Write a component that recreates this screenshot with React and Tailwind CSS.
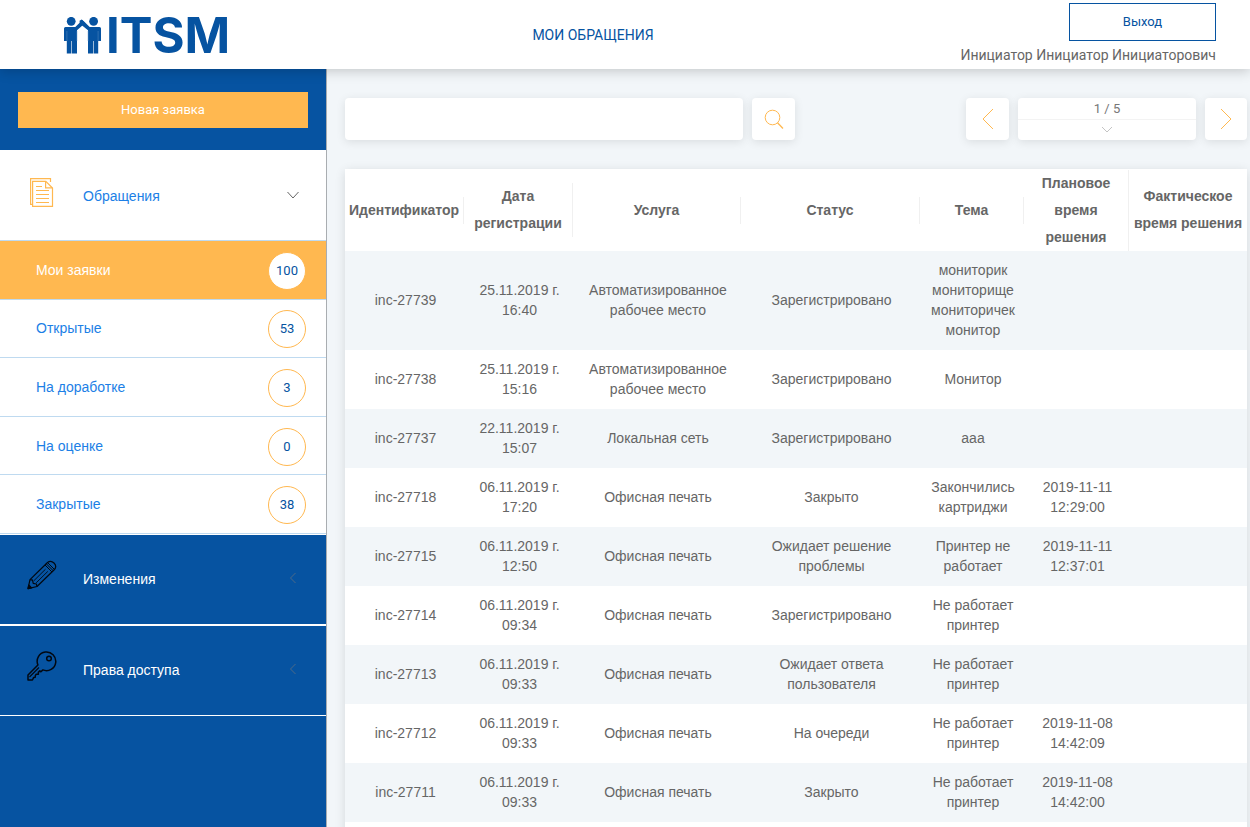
import React from 'react';

const COLUMNS = [
  { title: 'Идентификатор', width: 'w-[119px]' },
  { title: 'Дата регистрации', width: 'w-[109px]' },
  { title: 'Услуга', width: 'w-[168px]' },
  { title: 'Статус', width: 'w-[179px]' },
  { title: 'Тема', width: 'w-[104px]' },
  { title: 'Плановое время решения', width: 'w-[105px]' },
  { title: 'Фактическое время решения', width: 'w-[118px]' },
];

const ROWS = [
  ['inc-27739', '25.11.2019 г. 16:40', 'Автоматизированное рабочее место', 'Зарегистрировано', 'мониторик мониторище мониторичек монитор', '', ''],
  ['inc-27738', '25.11.2019 г. 15:16', 'Автоматизированное рабочее место', 'Зарегистрировано', 'Монитор', '', ''],
  ['inc-27737', '22.11.2019 г. 15:07', 'Локальная сеть', 'Зарегистрировано', 'ааа', '', ''],
  ['inc-27718', '06.11.2019 г. 17:20', 'Офисная печать', 'Закрыто', 'Закончились картриджи', '2019-11-11 12:29:00', ''],
  ['inc-27715', '06.11.2019 г. 12:50', 'Офисная печать', 'Ожидает решение проблемы', 'Принтер не работает', '2019-11-11 12:37:01', ''],
  ['inc-27714', '06.11.2019 г. 09:34', 'Офисная печать', 'Зарегистрировано', 'Не работает принтер', '', ''],
  ['inc-27713', '06.11.2019 г. 09:33', 'Офисная печать', 'Ожидает ответа пользователя', 'Не работает принтер', '', ''],
  ['inc-27712', '06.11.2019 г. 09:33', 'Офисная печать', 'На очереди', 'Не работает принтер', '2019-11-08 14:42:09', ''],
  ['inc-27711', '06.11.2019 г. 09:33', 'Офисная печать', 'Закрыто', 'Не работает принтер', '2019-11-08 14:42:00', ''],
  ['', '', '', '', '', '', ''],
];

const FILTERS = [
  { label: 'Мои заявки', count: 100, active: true },
  { label: 'Открытые', count: 53 },
  { label: 'На доработке', count: 3 },
  { label: 'На оценке', count: 0 },
  { label: 'Закрытые', count: 38 },
];

const ROBOTO = "font-['Roboto',sans-serif]";
const PANEL = 'bg-white rounded-[4px] shadow-[0_2px_10px_rgba(0,0,0,0.1)]';

function Chevron({ points, width, height, className }) {
  return (
    <svg width={width} height={height} viewBox={`0 0 ${width} ${height}`} className={className} fill="none" stroke="currentColor" aria-hidden="true">
      <polyline points={points} />
    </svg>
  );
}

function PeopleLogo() {
  return (
    <svg width="38" height="37" viewBox="0 0 38 37" fill="#0653a1" aria-hidden="true">
      <circle cx="7.2" cy="4.3" r="4.4" />
      <circle cx="29.6" cy="4.3" r="4.4" />
      <path d="M1.5 10H11.3L16.2 5.2L15.2 4L17.6 2.6L20.8 5.6L19.6 7.6L13 13.2V36.5H7.9V24H7.3V36.5H2.8V24H0V11.5Q0 10 1.5 10Z" />
      <path d="M35.5 10H25.7L20.6 5L18 2.8L15.5 5.5L17.5 8L24 13.2V36.5H29V24H29.6V36.5H34.2V24H37V11.5Q37 10 35.5 10Z" />
      <path d="M2.9 14V24M12.9 14V24M24.1 14V24M34.1 14V24" stroke="#5c8fc2" strokeWidth="0.5" />
    </svg>
  );
}

function DocsIcon() {
  return (
    <svg width="30" height="30" viewBox="0 0 30 30" fill="none" stroke="#ffb850" strokeWidth="1.2" aria-hidden="true">
      <path d="M5.5 27.4H3.6V1.6H23.5V5" />
      <path d="M5.6 4.4H18.8L25.5 11V29.4H5.6Z" />
      <path d="M18.6 4.4V10.8H25.3" />
      <path d="M9 9.5H15M9 13.5H22M9 17.5H22M9 21.5H22M9 25.5H22" />
    </svg>
  );
}

function PencilIcon() {
  return (
    <svg width="30" height="30" viewBox="0 0 30 30" fill="none" stroke="#020811" strokeWidth="1.2" strokeLinejoin="round" aria-hidden="true">
      <path d="M1 28.6L3 19.6L20.5 2.5Q23.8-0.2 27 3Q30.2 6.2 27.5 9.5L10 26.5Z" />
      <path d="M3 19.6L5.6 20.2L6.2 23.4L9.4 24L10 26.5" />
      <path d="M18 5L25 12M20.6 2.6L27.4 9.4M19.3 3.8L26.2 10.7" strokeWidth="1" />
      <path d="M7 20.6L18.5 9.2M9.2 22.8L20.8 11.4" strokeWidth="0.9" />
      <path d="M1 28.6L1.8 25L4.6 27.8Z" fill="#020811" />
    </svg>
  );
}

function KeyIcon() {
  return (
    <svg width="30" height="30" viewBox="0 0 30 30" fill="none" stroke="#020811" strokeWidth="1.5" strokeLinejoin="round" aria-hidden="true">
      <path d="M10.9 13.9A9.3 9.3 0 1 1 15.9 18.9L13.9 20.8L12.8 19.9L11.3 21.4L11.4 23.2L9.2 23.3L8.3 24.6L8.2 26.2L6.6 26.6L5.4 29H1V24L10.9 13.9Z" />
      <circle cx="22" cy="7.5" r="2.3" />
      <path d="M2.5 26L12 16.5" strokeWidth="1.1" />
    </svg>
  );
}

function SectionItem({ icon, label, children, className }) {
  return (
    <button type="button" className={`flex w-full items-center text-left pl-[27px] pr-[26px] ${className}`}>
      <span className="-mt-[6px]">{icon}</span>
      <span className="ml-[26px] flex-1 pt-[2px]">{label}</span>
      {children}
    </button>
  );
}

export default function App() {
  return (
    <div className="flex h-screen flex-col overflow-hidden bg-[#f2f6f9] text-[14px] leading-[20px] text-[#666] font-['Liberation_Sans',Arial,sans-serif]">
      <header className={`relative z-10 grid h-[69px] shrink-0 grid-cols-[532fr_auto_596fr] bg-white shadow-[0_2px_12px_rgba(0,0,0,0.2)] ${ROBOTO}`}>
        <a href="#home" aria-label="ITSM" className="flex items-center pl-16 pt-[2px] text-[#0653a1]">
          <PeopleLogo />
          <span className="ml-1 font-['Inter',sans-serif] text-[49px] font-bold leading-none">ITSM</span>
        </a>
        <a href="#requests" className="self-center text-[#0653a1]">МОИ ОБРАЩЕНИЯ</a>
        <div className="flex flex-col items-end pt-[3px] pr-[34px]">
          <button type="button" className="h-[38px] w-[147px] border border-[#0653a1] text-[13px] text-[#0653a1]">Выход</button>
          <span className="mt-1">Инициатор Инициатор Инициаторович</span>
        </div>
      </header>

      <div className="flex min-h-0 flex-1">
        <aside className="w-[327px] shrink-0 border-r border-[#a9adb1] bg-[#0653a1]">
          <div className="h-[81px] px-[18px] pt-[23px]">
            <button type="button" className={`h-9 w-full bg-[#ffb850] text-[13px] text-white ${ROBOTO}`}>Новая заявка</button>
          </div>
          <nav>
            <SectionItem icon={<DocsIcon />} label="Обращения" className="h-[91px] border-b border-[#bfdaf0] bg-white text-[#1c7fe6]">
              <Chevron width={14} height={10} points="1.5,2 7,8 12.5,2" className="text-[#666]" />
            </SectionItem>
            <ul className="grid h-[293px] grid-rows-5">
              {FILTERS.map((f) => (
                <li key={f.label}>
                  <a
                    href="#filter"
                    className={`flex h-full items-center justify-between border-b border-[#bfdaf0] pl-9 pr-5 ${f.active ? 'bg-[#ffb850] text-white' : 'bg-white text-[#1c7fe6]'}`}
                  >
                    <span>{f.label}</span>
                    <span className={`mt-[2px] flex size-[38px] items-center justify-center rounded-full border border-[#ffb850] bg-white text-[13px] text-[#0653a1] ${ROBOTO}`}>
                      {f.count}
                    </span>
                  </a>
                </li>
              ))}
            </ul>
            <SectionItem icon={<PencilIcon />} label="Изменения" className="h-[91px] border-y border-white pb-[3px] text-white">
              <Chevron width={14} height={12} points="9.5,1 4.5,6 9.5,11" className="text-[#4d6a88]" />
            </SectionItem>
            <SectionItem icon={<KeyIcon />} label="Права доступа" className="h-[91px] border-y border-white pb-[3px] text-white">
              <Chevron width={14} height={12} points="9.5,1 4.5,6 9.5,11" className="text-[#4d6a88]" />
            </SectionItem>
          </nav>
        </aside>

        <main className="min-w-0 flex-1 overflow-y-auto pt-[29px] pr-[3px] pl-[18px] [scrollbar-width:none]">
          <div className="flex h-[42px] gap-[9px]">
            <input type="search" aria-label="Поиск" className={`w-[398px] px-3 outline-none ${PANEL}`} />
            <button type="button" aria-label="Найти" className={`flex w-[43px] items-center justify-center ${PANEL}`}>
              <svg width="20" height="20" viewBox="0 0 20 20" fill="none" stroke="#ffb850" aria-hidden="true">
                <circle cx="8.5" cy="8.5" r="7.3" />
                <path d="M13.5 13.8L19 19.5" strokeWidth="1.3" />
              </svg>
            </button>
            <button type="button" aria-label="Предыдущая страница" className={`ml-auto flex w-[43px] items-center justify-center text-[#ffb850] ${PANEL}`}>
              <Chevron width={12} height={22} points="11,1 1,11 11,21" />
            </button>
            <button type="button" className={`flex w-[178px] flex-col items-center text-[#777] ${PANEL} ${ROBOTO}`}>
              <span className="h-[22px] w-full border-b border-[#f3f3f3] text-[13px] leading-[21px]">1 / 5</span>
              <Chevron width={12} height={8} points="1,1 6,6 11,1" className="mt-[6px] text-[#c4c4c4]" />
            </button>
            <button type="button" aria-label="Следующая страница" className={`flex w-[42px] items-center justify-center text-[#ffb850] ${PANEL}`}>
              <Chevron width={12} height={22} points="1,1 11,11 1,21" />
            </button>
          </div>

          <table className="mt-[29px] w-full table-fixed border-collapse bg-white text-center shadow-[0_2px_10px_rgba(0,0,0,0.12)]">
            <colgroup>
              {COLUMNS.map((c) => <col key={c.title} className={c.width} />)}
            </colgroup>
            <thead>
              <tr className="h-[82px]">
                {COLUMNS.map((c, i) => (
                  <th key={c.title} scope="col" className="p-0 font-bold leading-[27px]">
                    <div className={i < COLUMNS.length - 1 ? 'border-r border-[#f0f0f0]' : ''}>{c.title}</div>
                  </th>
                ))}
              </tr>
            </thead>
            <tbody>
              {ROWS.map((row, r) => (
                <tr key={r} className="h-[59px] odd:bg-[#f2f6f9]">
                  {row.map((cell, i) => (
                    <td key={i} className="pr-[9px] pl-[11px] pt-[9px] pb-[10px]">{cell}</td>
                  ))}
                </tr>
              ))}
            </tbody>
          </table>
        </main>
      </div>
    </div>
  );
}
